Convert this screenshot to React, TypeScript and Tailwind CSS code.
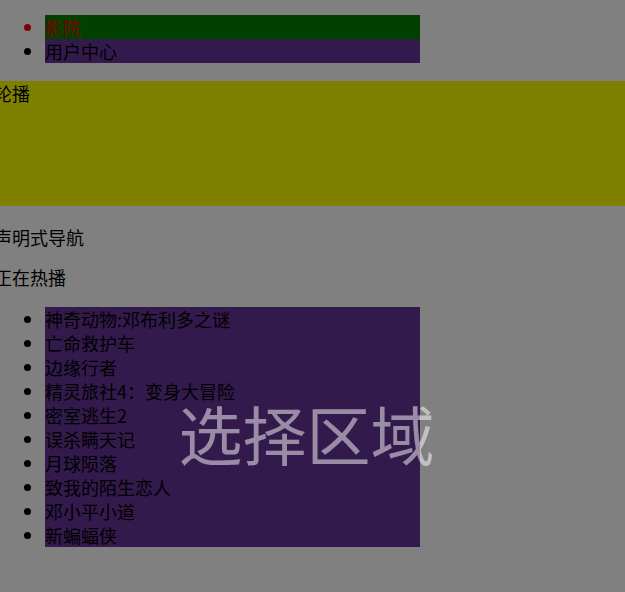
import React from 'react';

const nowPlaying = [
  '神奇动物:邓布利多之谜',
  '亡命救护车',
  '边缘行者',
  '精灵旅社4：变身大冒险',
  '密室逃生2',
  '误杀瞒天记',
  '月球陨落',
  '致我的陌生恋人',
  '邓小平小道',
  '新蝙蝠侠',
];

const App: React.FC = () => {
  return (
    <div
      className="relative min-h-[592px] overflow-hidden bg-[#808080] text-[18px] leading-[24px] text-black"
      style={{ fontFamily: '"Microsoft YaHei", "Noto Sans CJK SC", "Noto Sans", sans-serif' }}
    >
      <ul className="mt-[15px] w-[420px] list-disc pl-[45px]">
        <li className="bg-[#004000] text-[#800000]">影院</li>
        <li className="bg-[#331a4d]">用户中心</li>
      </ul>

      <div className="mt-[18px] h-[125px] bg-[#808000]">
        <div className="-ml-[6px]">轮播</div>
      </div>

      <p className="-ml-[6px] mt-[19px]">声明式导航</p>
      <p className="-ml-[6px] mt-[16px]">正在热播</p>

      <ul className="mt-[18px] w-[420px] list-disc bg-[#808080] pl-[45px]">
        {nowPlaying.map((title) => (
          <li key={title} className="bg-[#331a4d]">
            {title}
          </li>
        ))}
      </ul>

      {/* selection overlay label */}
      <div className="pointer-events-none absolute left-0 right-0 top-[388px] flex justify-center pr-[12px]">
        <span className="text-[64px] leading-[88px] text-white/50">选择区域</span>
      </div>
    </div>
  );
};

export default App;
